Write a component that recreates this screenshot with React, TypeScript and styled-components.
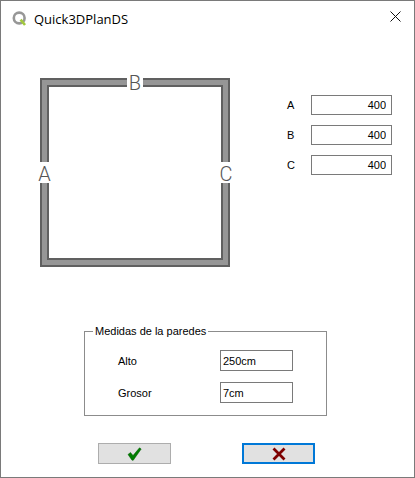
import React, { FC } from 'react'
import styled, { createGlobalStyle } from 'styled-components'

const GlobalStyle = createGlobalStyle`
  html, body {
    margin: 0;
    padding: 0;
    background: #fff;
  }
  * {
    box-sizing: border-box;
  }
`
const Window = styled.div`
  width: 415px;
  height: 478px;
  background: #fff;
  border: 1px solid #7a7a7a;
  display: flex;
  flex-direction: column;
  font-family: "Liberation Sans", Arial, sans-serif;
  font-size: 11px;
  color: #000;
`
const TitleBar = styled.div`
  height: 29px;
  padding: 10px 13px 0 11px;
  display: flex;
  align-items: flex-start;
`
const Title = styled.span`
  margin-left: 7px;
  font-family: "Open Sans", sans-serif;
  font-size: 13px;
  line-height: 16px;
  color: #000;
  flex: 1;
`
const TopArea = styled.div`
  display: flex;
  height: 295px;
  padding: 36px 0 0 35px;
`
const PlanHolder = styled.div`
  width: 198px;
  height: 203px;
  margin-top: 2px;
`
const Sizes = styled.div`
  margin: 29px 0 0 53px;
  display: flex;
  flex-direction: column;
  gap: 10px;
`
const SizeRow = styled.label`
  display: flex;
  align-items: center;
`
const SizeName = styled.span`
  width: 24px;
`
const Field = styled.input<{ $align?: string; $width: number }>`
  width: ${p => p.$width}px;
  height: ${p => (p.$align === 'right' ? 20 : 21)}px;
  border: 1px solid #7a7a7a;
  border-radius: 0;
  outline: none;
  padding: 0 5px 0 2px;
  background: #fff;
  font: inherit;
  color: #000;
  text-align: ${p => p.$align || 'left'};
`
const Group = styled.fieldset`
  width: 243px;
  height: 91px;
  margin: 0 0 0 83px;
  padding: 0;
  border: 1px solid #8c8c8c;
  display: flex;
  flex-direction: column;
  gap: 11px;
`
const Legend = styled.legend`
  margin-left: 8px;
  padding: 0 2px;
  font-size: 11px;
  line-height: 13px;
`
const GroupRow = styled.label`
  display: flex;
  align-items: center;
  padding-left: 33px;
  &:first-of-type {
    margin-top: 12px;
  }
`
const GroupName = styled.span`
  width: 102px;
`
const Buttons = styled.div`
  margin: 27px 0 0 97px;
  display: flex;
  gap: 71px;
`
const DialogButton = styled.button<{ $focused?: boolean }>`
  width: 73px;
  height: 21px;
  padding: 0;
  border: ${p => (p.$focused ? '2px solid #0078d7' : '1px solid #adadad')};
  border-radius: 0;
  background: #e1e1e1;
  display: flex;
  align-items: center;
  justify-content: center;
`

const AppIcon: FC = () => (
  <svg width="15" height="15" viewBox="0 0 15 15">
    <circle cx="7.2" cy="7" r="5.4" fill="none" stroke="#979797" strokeWidth="2.6" />
    <path d="M8.6 8.6 L13 14" stroke="#a2c83c" strokeWidth="2.6" fill="none" />
  </svg>
)

const CloseIcon: FC = () => (
  <svg width="11" height="11" viewBox="0 0 11 11">
    <path d="M0.5 0.5 L10.5 10.5 M10.5 0.5 L0.5 10.5" stroke="#111" strokeWidth="1" fill="none" />
  </svg>
)

const CheckIcon: FC = () => (
  <svg width="15" height="14" viewBox="0 0 15 14">
    <path d="M1 7.5 L3.5 5.5 L6 8.5 L12.5 0.8 L14.2 2 L6.3 13.2 L5 13.2 Z" fill="#007d00" stroke="#005c00" strokeWidth="0.5" />
  </svg>
)

const CrossIcon: FC = () => (
  <svg width="14" height="14" viewBox="0 0 14 14">
    <path d="M1.5 1.5 L12.5 12.5 M12.5 1.5 L1.5 12.5" stroke="#7d0000" strokeWidth="2.8" fill="none" />
  </svg>
)

const wallLabel = {
  fontFamily: 'Roboto, sans-serif',
  fontSize: 20,
  fontWeight: 300,
  fill: '#555',
  textAnchor: 'middle' as const,
}

// the viewBox leaves room round the walls so the letters are not clipped
const PlanDrawing: FC = () => (
  <svg width="198" height="203" viewBox="-4 -10 198 203">
    <rect x="0" y="0" width="190" height="189" fill="#606060" />
    <rect x="2" y="2" width="186" height="185" fill="#969696" />
    <rect x="7" y="7" width="176" height="175" fill="#606060" />
    <rect x="9" y="9" width="172" height="171" fill="#fff" />
    <rect x="87" y="-1" width="16" height="11" fill="#fff" />
    <rect x="-1" y="84" width="11" height="21" fill="#fff" />
    <rect x="180" y="84" width="11" height="21" fill="#fff" />
    <text x="95" y="12" {...wallLabel}>B</text>
    <text x="4.5" y="103" {...wallLabel}>A</text>
    <text x="186" y="103" {...wallLabel}>C</text>
  </svg>
)

const sizes = ['A', 'B', 'C']

const App: FC = () => {
  return (
    <Window>
      <GlobalStyle />
      <TitleBar>
        <AppIcon />
        <Title>Quick3DPlanDS</Title>
        <CloseIcon />
      </TitleBar>
      <TopArea>
        <PlanHolder>
          <PlanDrawing />
        </PlanHolder>
        <Sizes>
          {sizes.map(name => (
            <SizeRow key={name}>
              <SizeName>{name}</SizeName>
              <Field $align="right" $width={81} defaultValue="400" />
            </SizeRow>
          ))}
        </Sizes>
      </TopArea>
      <Group>
        <Legend>Medidas de la paredes</Legend>
        <GroupRow>
          <GroupName>Alto</GroupName>
          <Field $width={73} defaultValue="250cm" />
        </GroupRow>
        <GroupRow>
          <GroupName>Grosor</GroupName>
          <Field $width={73} defaultValue="7cm" />
        </GroupRow>
      </Group>
      <Buttons>
        <DialogButton>
          <CheckIcon />
        </DialogButton>
        <DialogButton $focused>
          <CrossIcon />
        </DialogButton>
      </Buttons>
    </Window>
  )
}

export default App
